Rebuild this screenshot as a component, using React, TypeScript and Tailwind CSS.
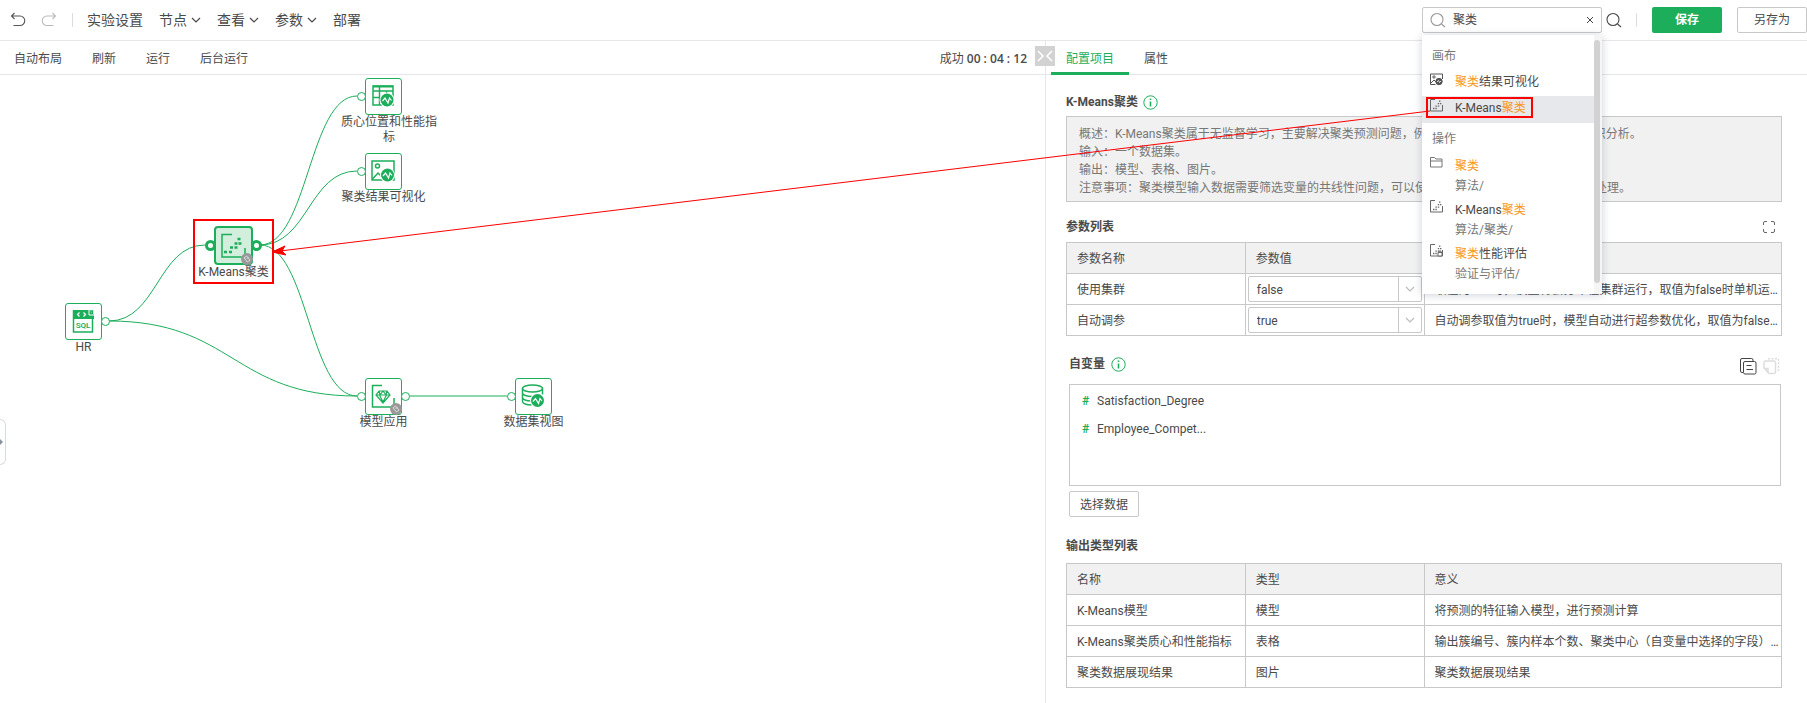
import { useState } from "react";
import type { ReactNode } from "react";

const menus = [
  { name: "实验设置", arrow: false },
  { name: "节点", arrow: true },
  { name: "查看", arrow: true },
  { name: "参数", arrow: true },
  { name: "部署", arrow: false },
];

const actions = ["自动布局", "刷新", "运行", "后台运行"];

const params = [
  { name: "使用集群", value: "false", desc: "取值为true时，模型将会分布在集群运行，取值为false时单机运行模型训练。" },
  { name: "自动调参", value: "true", desc: "自动调参取值为true时，模型自动进行超参数优化，取值为false时不进行优化。" },
];

const outputs = [
  { name: "K-Means模型", type: "模型", desc: "将预测的特征输入模型，进行预测计算" },
  { name: "K-Means聚类质心和性能指标", type: "表格", desc: "输出簇编号、簇内样本个数、聚类中心（自变量中选择的字段）和性能指标" },
  { name: "聚类数据展现结果", type: "图片", desc: "聚类数据展现结果" },
];

const variables = ["Satisfaction_Degree", "Employee_Compet..."];

// one bezier per connection, from output port to input port
const edges = [
  "M260 170 C308 170 309 21 357 21",
  "M260 170 C308 170 309 96 357 96",
  "M260 170 C308 170 309 321 357 321",
  "M109 246 C157 246 158 170 205 170",
  "M109 246 C233 246 233 321 357 321",
  "M409 321 H507",
];

function Chevron({ className }: { className?: string }) {
  return (
    <svg className={className} width="10" height="10" viewBox="0 0 10 10" fill="none" stroke="currentColor" strokeWidth="1.2">
      <path d="M1 3l4 4 4-4" />
    </svg>
  );
}

function SearchIcon({ className }: { className?: string }) {
  return (
    <svg className={className} width="16" height="16" viewBox="0 0 16 16" fill="none" stroke="currentColor" strokeWidth="1.1">
      <circle cx="7" cy="7.5" r="6" />
      <path d="M11.5 12l3.5 3" />
    </svg>
  );
}

function InfoIcon() {
  return (
    <svg width="15" height="15" viewBox="0 0 15 15" fill="none" stroke="#1cae5b">
      <circle cx="7.5" cy="7.5" r="6.7" />
      <path d="M7.5 6.5v5M7.5 3.5v1.6" strokeWidth="1.6" />
    </svg>
  );
}

function ScatterIcon({ locked }: { locked?: boolean }) {
  return (
    <svg width="13" height="13" viewBox="0 0 13 13" fill="none" stroke="#666">
      <path d="M5 .5H.5v11.5h12V6" />
      <path d="M3 9.5h1.4M5.4 9.5h1.4M5.4 7.2h1.4M7.8 7.2h1.4M7.8 4.6h1.4M9 2.2h1.4M10 4.6h1.4" strokeWidth="1.3" />
      {locked && <path d="M8 8.5h4v3.5h-4zM9 8V7h2v1" fill="#fff" />}
    </svg>
  );
}

function PictureIcon() {
  return (
    <svg width="13" height="13" viewBox="0 0 13 13" fill="none" stroke="#555">
      <path d="M12.500 6V1H.5v10.500h5" />
      <circle cx="4" cy="4" r="1.200" />
      <path d="M1 10l3-3 2 2" />
      <circle cx="9" cy="8.500" r="3.200" fill="#555" />
      <path d="M7 9l1.500-1.500L9.500 9.500 11 8" stroke="#fff" strokeWidth=".8" />
    </svg>
  );
}

function FolderIcon() {
  return (
    <svg width="13" height="13" viewBox="0 0 13 13" fill="none" stroke="#777">
      <path d="M.5 11V1.500h4l1.500 1.500h6V11zM.5 5h11.500" />
    </svg>
  );
}

function WaveBadge({ x, y }: { x: number; y: number }) {
  return (
    <g>
      <circle cx={x} cy={y} r="7.5" fill="#fff" stroke="none" />
      <circle cx={x} cy={y} r="6.5" fill="#1cae5b" stroke="none" />
      <path transform={`translate(${x} ${y})`} d="M-4.500 1l2.500-3 3 5 1.500-5 2 2.500" stroke="#fff" strokeWidth="1.2" />
    </g>
  );
}

const drawings: Record<string, ReactNode> = {
  table: (
    <>
      <path d="M8 8h20v19H8zM8 13h20M8 19.500h20M14.500 8v19M21.500 13v5" strokeWidth="1.5" />
      <path d="M8 8.500h20" strokeWidth="2" />
      <WaveBadge x={22} y={22} />
    </>
  ),
  picture: (
    <>
      <path d="M7 8h22v19H7z" strokeWidth="1.5" />
      <circle cx="12.500" cy="13" r="2" strokeWidth="1.5" />
      <path d="M7.500 26l5.500-6 4 4 4-4" strokeWidth="1.5" />
      <WaveBadge x={22.5} y={22} />
    </>
  ),
  sql: (
    <>
      <path d="M8.500 8h19v21h-19z" strokeWidth="1.5" />
      <path d="M8 7h16l5 5v4H8z" fill="#1cae5b" stroke="none" />
      <path d="M24 7v5h5" stroke="#fff" />
      <path d="M14.500 9.500L12.500 11.500l2 2M18.500 9.500l2 2-2 2" stroke="#fff" strokeWidth="1.2" />
      <text x="18" y="24.500" textAnchor="middle" fontSize="8" fontWeight="600" fill="#1cae5b" stroke="none">SQL</text>
    </>
  ),
  diamond: (
    <>
      <path d="M17 7.500H7.500v21.500h21.500V20" strokeWidth="1.5" />
      <path d="M14 13h8l3 4-7 8-7-8zM11 17h14M14.500 17l3.500 7 3.500-7M14 13l1 4 3-4 3 4 1-4" strokeWidth="1.2" />
    </>
  ),
  database: (
    <>
      <ellipse cx="17.500" cy="10.500" rx="10" ry="3.500" strokeWidth="1.5" />
      <path d="M7.500 10.500v13c0 2 4 3.500 9 3.500M27.500 10.500v6M7.500 15c0 2 4.500 3.500 9.500 3.500M7.500 19.500c0 2 4 3.500 8.500 3.500" strokeWidth="1.5" />
      <WaveBadge x={22.5} y={22.5} />
    </>
  ),
};

function LockBadge({ className }: { className: string }) {
  return (
    <svg className={className} width="12" height="12" viewBox="0 0 12 12">
      <circle cx="6" cy="6" r="6" fill="#999" />
      <path d="M3 5l2.500-2 3.500 4-2.500 2zM5.500 6l2-2" fill="none" stroke="#ddd" />
    </svg>
  );
}

function Port({ className }: { className: string }) {
  return <span className={`absolute size-[9px] rounded-full border border-[#1cae5b] bg-white ${className}`} />;
}

interface NodeProps {
  icon: string;
  label: string;
  className: string;
  input?: boolean;
  output?: boolean;
  locked?: boolean;
}

function FlowNode({ icon, label, className, input, output, locked }: NodeProps) {
  // labels longer than one line start level with the short ones
  const labelWidth = label.length > 8 ? "w-24 -mr-[11px]" : "";
  return (
    <div className={`absolute flex w-[97px] flex-col items-center ${className}`}>
      <div className="relative size-[37px] rounded-[3px] border border-[#1cae5b] bg-white">
        <svg className="-m-px" width="37" height="37" viewBox="0 0 37 37" fill="none" stroke="#1cae5b">
          {drawings[icon]}
        </svg>
        {input && <Port className="top-[13px] -left-[9px]" />}
        {output && <Port className="top-[13px] -right-[9px]" />}
        {locked && <LockBadge className="absolute -right-px -bottom-px" />}
      </div>
      <span className={`text-center leading-[15px] ${labelWidth}`}>{label}</span>
    </div>
  );
}

function Canvas() {
  return (
    <div className="relative flex-1 overflow-hidden">
      <svg className="absolute top-0 left-0" width="600" height="400" fill="none" stroke="#1cae5b">
        {edges.map((d) => (
          <path key={d} d={d} />
        ))}
      </svg>
      <FlowNode icon="table" label="质心位置和性能指标" className="top-[3px] left-[335px]" input />
      <FlowNode icon="picture" label="聚类结果可视化" className="top-[78px] left-[335px]" input />
      <FlowNode icon="sql" label="HR" className="top-[228px] left-[35px]" output />
      <FlowNode icon="diamond" label="模型应用" className="top-[303px] left-[335px]" input output locked />
      <FlowNode icon="database" label="数据集视图" className="top-[303px] left-[485px]" input />

      {/* Selected node */}
      <div className="absolute top-[151px] left-[185px] flex w-[97px] flex-col items-center">
        <div className="relative size-[39px] rounded-[4px] border-2 border-[#1cae5b] bg-[#d2efde]">
          <svg className="-m-[2px]" width="39" height="39" viewBox="0 0 39 39" fill="none" stroke="#1cae5b">
            <path d="M18 8.500H8V31h23V22" strokeWidth="1.5" />
            <path d="M10 26h3M15 26h3M16 21.500h3M20.500 21.500h3M20.500 17.500h3M24.500 17.500h3M23.500 13h3" strokeWidth="2.5" />
          </svg>
          <span className="absolute top-3 -left-[11px] size-[11px] rounded-full border-[3px] border-[#1cae5b] bg-white" />
          <span className="absolute top-3 -right-[11px] size-[11px] rounded-full border-[3px] border-[#1cae5b] bg-white" />
          <LockBadge className="absolute -right-[2px] -bottom-[2px]" />
        </div>
        <span className="leading-[15px]">K-Means聚类</span>
      </div>

      {/* Drawer handle */}
      <button aria-label="展开" className="absolute top-[344px] left-0 flex h-[46px] w-[6px] items-center rounded-r-md border border-l-0 border-[#d5dbe0] bg-white">
        <svg width="3" height="6" viewBox="0 0 3 6" fill="#8a94a0">
          <path d="M0 0l3 3-3 3z" />
        </svg>
      </button>
    </div>
  );
}

function Hit({ children }: { children: ReactNode }) {
  return <span className="text-[#f8981d]">{children}</span>;
}

function SearchMenu() {
  const item = "flex w-full items-start pl-2 text-left";
  return (
    <div className="absolute top-7 left-0 z-20 w-[180px] bg-white pt-[7px] pb-2 shadow-[0_1px_8px_rgba(60,70,100,0.25)]">
      <div className="flex h-7 items-center pl-[10px] text-[#777]">画布</div>
      <button className={`${item} h-[26px] pt-[3px]`}>
        <PictureIcon />
        <span className="pl-3 leading-[18px]"><Hit>聚类</Hit>结果可视化</span>
      </button>
      <button className={`${item} h-[27px] bg-[#e7e8ec] pt-[3px]`}>
        <ScatterIcon />
        <span className="pl-3 leading-[18px]">K-Means<Hit>聚类</Hit></span>
      </button>
      <div className="flex h-[31px] items-center pt-[2px] pl-[10px] text-[#777]">操作</div>
      <button className={`${item} h-11 pt-[2px]`}>
        <FolderIcon />
        <span className="pl-3 leading-5"><Hit>聚类</Hit><br /><span className="text-[#777]">算法/</span></span>
      </button>
      <button className={`${item} h-11 pt-[2px]`}>
        <ScatterIcon />
        <span className="pl-3 leading-5">K-Means<Hit>聚类</Hit><br /><span className="text-[#777]">算法/聚类/</span></span>
      </button>
      <button className={`${item} h-11 pt-[2px]`}>
        <ScatterIcon locked />
        <span className="pl-3 leading-5"><Hit>聚类</Hit>性能评估<br /><span className="text-[#777]">验证与评估/</span></span>
      </button>
      <span className="absolute top-0 right-0 h-full w-2 bg-[#f5f5f5]" />
      <span className="absolute top-[5px] right-[2px] h-[243px] w-[6px] rounded-full bg-[#d2d2d2]" />
    </div>
  );
}

function Header() {
  const [query, setQuery] = useState("聚类");
  return (
    <header className="flex h-[41px] shrink-0 items-center border-b border-[#e6e6e9] text-sm">
      <button aria-label="撤销" className="ml-[10px]">
        <svg width="16" height="16" viewBox="0 0 16 16" fill="none" stroke="#555" strokeWidth="1.1">
          <path d="M4.500 1L1.500 4l3 3M1.500 4H10a4.500 4.500 0 0 1 0 9.500H3.500" />
        </svg>
      </button>
      <button aria-label="重做" className="ml-[15px]">
        <svg width="16" height="16" viewBox="0 0 16 16" fill="none" stroke="#bbb" strokeWidth="1.1">
          <path d="M11.500 1l3 3-3 3M14.500 4H6a4.500 4.500 0 0 0 0 9.500h6.500" />
        </svg>
      </button>
      <span className="mr-[14px] ml-[15px] h-[14px] w-px bg-[#ddd]" />
      <nav className="flex flex-1 gap-4">
        {menus.map((m) => (
          <button key={m.name} className="flex items-center gap-1">
            {m.name}
            {m.arrow && <Chevron />}
          </button>
        ))}
      </nav>
      <div className="relative -mt-px flex items-center text-xs">
        <label className="flex h-[26px] w-[180px] items-center rounded-[2px] border border-[#c8c8c8] bg-white px-[7px]">
          <SearchIcon className="text-[#999]" />
          <input
            aria-label="搜索"
            value={query}
            onChange={(e) => setQuery(e.target.value)}
            className="ml-[7px] w-0 flex-1 outline-none"
          />
          <button aria-label="清空" onClick={() => setQuery("")}>
            <svg width="8" height="8" viewBox="0 0 8 8" stroke="#444">
              <path d="M1 1l6 6M7 1L1 7" />
            </svg>
          </button>
        </label>
        <SearchMenu />
      </div>
      <button aria-label="查找" className="ml-1">
        <SearchIcon className="-mt-px" />
      </button>
      <span className="mr-[15px] ml-[14px] h-[14px] w-px bg-[#ddd]" />
      <button className="-mt-px h-[26px] w-[70px] rounded-[2px] bg-[#1cae5b] text-xs font-bold text-white">保存</button>
      <button className="-mt-px ml-[15px] h-[26px] w-[70px] rounded-[2px] border border-[#c8c8c8] text-xs">另存为</button>
    </header>
  );
}

function ConfigPanel() {
  const cell = "border border-[#c8c8c8] pt-[2px] px-[10px] font-normal text-left";
  return (
    <section className="flex-1 pr-[25px] pb-4 pl-5">
      <div className="flex items-center gap-[5px] pt-[15px] pb-[2px]">
        <h2 className="leading-6 font-bold">K-Means聚类</h2>
        <InfoIcon />
      </div>
      <div className="border border-[#c8c8c8] bg-[#f1f1f1] px-3 pt-2 pb-1 leading-[18px] text-[#777]">
        <p>概述：K-Means聚类属于无监督学习，主要解决聚类预测问题，例如客户细分、文本聚类、图像知识分析。</p>
        <p>输入：一个数据集。</p>
        <p>输出：模型、表格、图片。</p>
        <p>注意事项：聚类模型输入数据需要筛选变量的共线性问题，可以使用主成分分析等降维方法进行预处理。</p>
      </div>

      <div className="flex h-10 items-center justify-between pt-[10px] pr-[7px]">
        <h3 className="font-bold">参数列表</h3>
        <button aria-label="全屏">
          <svg width="12" height="12" viewBox="0 0 12 12" fill="none" stroke="#666">
            <path d="M4 .5H2A1.500 1.500 0 0 0 .5 2v2M8 .5h2A1.500 1.500 0 0 1 11.500 2v2M4 11.500H2A1.500 1.500 0 0 1 .5 10V8M8 11.500h2a1.500 1.500 0 0 0 1.500-1.500V8" />
          </svg>
        </button>
      </div>
      <table className="w-full table-fixed border-collapse">
        <thead>
          <tr className="h-[31px] bg-[#f1f1f1]">
            <th className={`${cell} w-1/4`}>参数名称</th>
            <th className={`${cell} w-1/4`}>参数值</th>
            <th className={cell}>参数说明</th>
          </tr>
        </thead>
        <tbody>
          {params.map((p) => (
            <tr key={p.name} className="h-[31px]">
              <td className={cell}>{p.name}</td>
              <td className="border border-[#c8c8c8] px-[2px]">
                <div className="relative">
                  <select
                    aria-label={p.name}
                    defaultValue={p.value}
                    className="block h-[26px] w-full appearance-none rounded-[2px] border border-[#c8c8c8] bg-white px-2 pt-[2px]"
                  >
                    <option>true</option>
                    <option>false</option>
                  </select>
                  <span className="pointer-events-none absolute inset-y-px right-px flex w-[23px] items-center justify-center border-l border-[#c8c8c8] text-[#bbb]">
                    <Chevron />
                  </span>
                </div>
              </td>
              <td className={`${cell} truncate pr-0!`}>{p.desc}</td>
            </tr>
          ))}
        </tbody>
      </table>

      <div className="mr-px ml-[3px]">
        <div className="flex h-12 items-center gap-[6px] pt-2">
          <h3 className="font-bold">自变量</h3>
          <InfoIcon />
          <button aria-label="复制" className="mt-1 ml-auto">
            <svg width="17" height="17" viewBox="0 0 17 17" fill="none" stroke="#444">
              <path d="M3 14.500H2A1.500 1.500 0 0 1 .5 13V2A1.500 1.500 0 0 1 2 .5h9.500A1.500 1.500 0 0 1 13 2v1M5 3.500h9.500A1.500 1.500 0 0 1 16 5v9.500a1.500 1.500 0 0 1-1.500 1.500H5a1.500 1.500 0 0 1-1.500-1.500V5A1.500 1.500 0 0 1 5 3.500zM6.500 7.500h5M6.500 11.500h6.500" />
            </svg>
          </button>
          <button aria-label="粘贴" className="mt-1 mr-px">
            <svg width="17" height="17" viewBox="0 0 17 17" fill="none" stroke="#ddd">
              <path d="M1 10V4.500A1.500 1.500 0 0 1 2.500 3H11a1.500 1.500 0 0 1 1.500 1.500V14a1.500 1.500 0 0 1-1.500 1.500H6zM1.500 10.500H5V15" strokeWidth="1.5" />
              <path d="M5 .8h10.500V13" strokeWidth="1.5" strokeDasharray="2 1.500" />
            </svg>
          </button>
        </div>
        <ul className="h-[102px] border border-[#c8c8c8] pt-[2px] pl-3">
          {variables.map((v) => (
            <li key={v} className="flex h-7 items-center gap-[6px]">
              <span className="w-[9px] font-semibold text-[#1cae5b]">#</span>
              {v}
            </li>
          ))}
        </ul>
        <button className="mt-[5px] block h-[26px] w-[70px] rounded-[2px] border border-[#c8c8c8] pt-[2px]">选择数据</button>
      </div>

      <h3 className="flex h-[46px] items-center pt-3 font-bold">输出类型列表</h3>
      <table className="w-full table-fixed border-collapse">
        <thead>
          <tr className="h-[31px] bg-[#f1f1f1]">
            <th className={`${cell} w-1/4`}>名称</th>
            <th className={`${cell} w-1/4`}>类型</th>
            <th className={cell}>意义</th>
          </tr>
        </thead>
        <tbody>
          {outputs.map((o) => (
            <tr key={o.name} className="h-[31px]">
              <td className={`${cell} pr-0! whitespace-nowrap`}>{o.name}</td>
              <td className={cell}>{o.type}</td>
              <td className={`${cell} truncate pr-0!`}>{o.desc}</td>
            </tr>
          ))}
        </tbody>
      </table>
    </section>
  );
}

export default function App() {
  return (
    <div className="relative flex min-h-screen flex-col overflow-hidden bg-white font-['Roboto','Noto_Sans_CJK_SC',sans-serif] text-xs text-[#4a4a4a]">
      <Header />
      <main className="flex flex-1">
        {/* Experiment canvas */}
        <div className="flex min-w-0 flex-1 flex-col">
          <div className="flex h-[34px] items-center gap-[30px] border-b border-[#e6e6e9] pt-[2px] pr-[18px] pl-[14px]">
            {actions.map((a) => (
              <button key={a}>{a}</button>
            ))}
            <span className="ml-auto">
              成功 <b className="font-['Open_Sans'] font-semibold">00 : 04 : 12</b>
            </span>
          </div>
          <Canvas />
        </div>

        {/* Node settings */}
        <aside className="relative flex w-[762px] shrink-0 flex-col border-l border-[#e6e6e9]">
          <button aria-label="收起" className="absolute top-[5px] -left-[11px] flex h-5 w-5 items-center justify-center bg-[#d2d2d2]">
            <svg width="18" height="14" viewBox="0 0 18 14" fill="none" stroke="#fff" strokeWidth="1.5">
              <path d="M2 2l5 5-5 5M16 2l-5 5 5 5" />
            </svg>
          </button>
          <div className="flex h-[34px] border-b border-[#e6e6e9] pl-[5px]">
            <button className="-mb-px border-b-3 border-[#1cae5b] px-[15px] pt-[5px] text-[#1cae5b]">配置项目</button>
            <button className="px-[15px] pt-[2px]">属性</button>
          </div>
          <ConfigPanel />
        </aside>
      </main>

      {/* Callout from the search hit to its node */}
      <svg className="pointer-events-none absolute top-0 right-0 z-30" width="1807" height="703" fill="none" stroke="#f00">
        <rect x="194" y="220" width="79" height="63" strokeWidth="2" />
        <rect x="1427" y="98" width="105" height="19" strokeWidth="2" />
        <path d="M1430 111L280 251" />
        <path d="M272 252l13-6-3 5 4 4z" fill="#f00" />
      </svg>
    </div>
  );
}
